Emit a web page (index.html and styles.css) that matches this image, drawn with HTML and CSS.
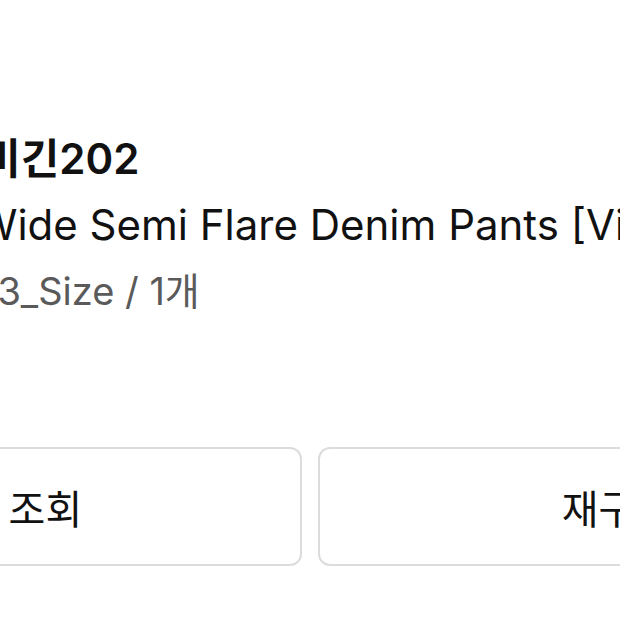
FILE: index.html
```html
<!DOCTYPE html>
<html lang="ko">
<head>
<meta charset="utf-8">
<link rel="stylesheet" href="styles.css">
</head>
<body>
<div class="page">
  <div class="item">
    <div class="info">
      <div class="brand">비긴202</div>
      <div class="title">Wide Semi Flare Denim Pants [Vintage Blue]</div>
      <div class="option">S3_Size / 1개</div>
      <div class="faint"></div>
    </div>
  </div>
  <div class="actions">
    <button class="btn">배송 조회</button>
    <button class="btn">재구매</button>
  </div>
</div>
</body>
</html>
```
FILE: styles.css
```css
html, body {
  margin: 0;
  padding: 0;
  background: #fff;
  overflow: hidden;
}
body {
  width: 620px;
  height: 620px;
  font-family: Inter, "Noto Sans CJK KR", sans-serif;
  color: #111;
}
.page {
  width: 1220px;
  margin-left: -296px;
}
.item {
  padding-top: 126px;
  padding-left: 272px;
}
.info {
  display: flex;
  flex-direction: column;
  white-space: nowrap;
}
.brand {
  font-size: 42px;
  font-weight: 600;
  line-height: 66px;
  height: 66px;
  margin-left: 6px;
}
.title {
  font-size: 42px;
  font-weight: 400;
  line-height: 66px;
  height: 66px;
}
.option {
  font-size: 38px;
  line-height: 66px;
  height: 66px;
  color: #5a5a5a;
  margin-left: -3px;
}
.faint {
  height: 60px;
}
.actions {
  display: flex;
  gap: 16px;
  margin-top: 63px;
}
.btn {
  flex: 0 0 598px;
  height: 119px;
  box-sizing: border-box;
  background: #fff;
  border: 2px solid #dcdcdc;
  border-radius: 12px;
  font-family: Inter, "Noto Sans CJK KR", sans-serif;
  font-size: 40px;
  font-weight: 400;
  color: #111;
  padding: 0;
}
```
